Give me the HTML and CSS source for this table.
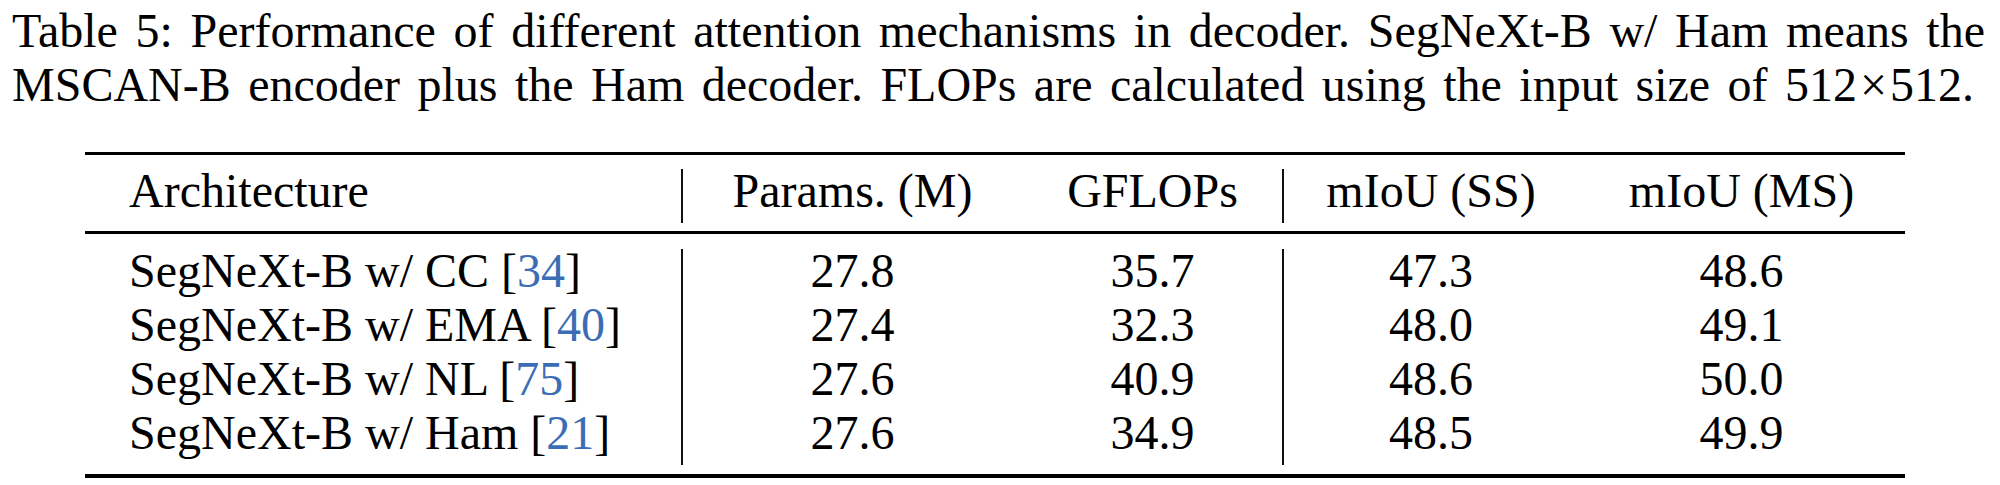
FILE: index.html
```html
<!DOCTYPE html>
<html lang="en">
<head>
<meta charset="utf-8">
<title>Table 5</title>
<link rel="stylesheet" href="styles.css">
</head>
<body>
<div class="page">
  <div class="caption">
    <span class="cap-line first-line">Table 5: Performance of different attention mechanisms in decoder. SegNeXt-B w/ Ham means the</span>
    <span class="cap-line last-line">MSCAN-B encoder plus the Ham decoder. FLOPs are calculated using the input size of 512<span class="op">×</span>512.</span>
  </div>
  <div class="table">
    <div class="rule top"></div>
    <div class="grid head">
      <div class="cell first">Architecture</div>
      <div class="cell c vl">Params. (M)</div>
      <div class="cell c">GFLOPs</div>
      <div class="cell c vl">mIoU (SS)</div>
      <div class="cell c">mIoU (MS)</div>
    </div>
    <div class="rule mid"></div>
    <div class="grid body">
      <div class="cell first">SegNeXt-B w/ CC [<span class="cite">34</span>]</div>
      <div class="cell c vl">27.8</div>
      <div class="cell c">35.7</div>
      <div class="cell c vl">47.3</div>
      <div class="cell c">48.6</div>

      <div class="cell first">SegNeXt-B w/ EMA [<span class="cite">40</span>]</div>
      <div class="cell c vl">27.4</div>
      <div class="cell c">32.3</div>
      <div class="cell c vl">48.0</div>
      <div class="cell c">49.1</div>

      <div class="cell first">SegNeXt-B w/ NL [<span class="cite">75</span>]</div>
      <div class="cell c vl">27.6</div>
      <div class="cell c">40.9</div>
      <div class="cell c vl">48.6</div>
      <div class="cell c">50.0</div>

      <div class="cell first">SegNeXt-B w/ Ham [<span class="cite">21</span>]</div>
      <div class="cell c vl">27.6</div>
      <div class="cell c">34.9</div>
      <div class="cell c vl">48.5</div>
      <div class="cell c">49.9</div>
    </div>
    <div class="rule bottom"></div>
  </div>
</div>
</body>
</html>
```

FILE: styles.css
```css
html, body {
  margin: 0;
  padding: 0;
  background: #ffffff;
}

body {
  font-family: "Liberation Serif", "Times New Roman", Times, serif;
  font-size: 48px;
  font-weight: 400;
  color: #000000;
}

.page {
  width: 2000px;
  height: 485px;
  overflow: hidden;
}

.caption {
  margin-left: 12px;
  width: 1973px;
  padding-top: 4px;
  line-height: 54px;
}

.cap-line {
  display: block;
  text-align: justify;
  text-align-last: justify;
}

.cap-line.last-line {
  margin-right: 11px;
}

.op {
  margin: 0 3px;
}

.table {
  margin-top: 40px;
  margin-left: 85px;
  width: 1820px;
}

.rule {
  background: #000000;
}

.rule.top {
  height: 3px;
  margin-bottom: 14px;
}

.rule.mid {
  height: 3px;
  margin-top: 8px;
  margin-bottom: 15px;
}

.rule.bottom {
  height: 4px;
  margin-top: 9px;
}

.grid {
  display: grid;
  grid-template-columns: 597px 340px 261px 295px 327px;
}

.cell {
  font-family: "Liberation Serif", "Times New Roman", Times, serif;
  line-height: 44px;
  height: 44px;
  padding-bottom: 10px;
  text-align: justify;
  text-align-last: left;
}

.cell.first {
  padding-left: 44px;
}

.cell.c {
  text-align-last: center;
}

.cell.vl {
  border-left: 2px solid #111111;
  margin-left: -1px;
}

.cite {
  color: #3b6db4;
}
```
